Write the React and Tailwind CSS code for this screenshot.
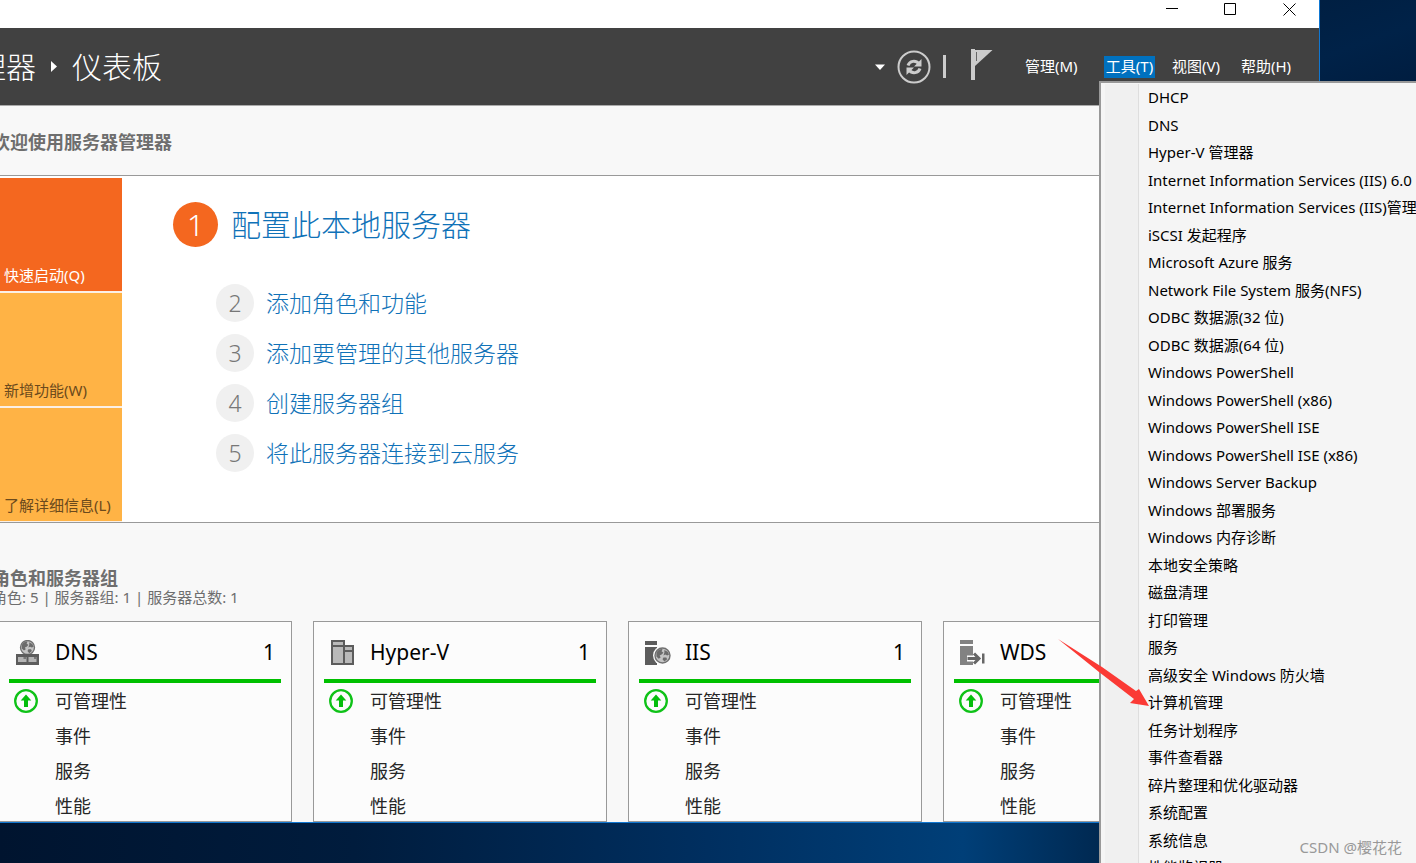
import React from "react";

const tools = [
  "DHCP",
  "DNS",
  "Hyper-V 管理器",
  "Internet Information Services (IIS) 6.0 管理器",
  "Internet Information Services (IIS)管理器",
  "iSCSI 发起程序",
  "Microsoft Azure 服务",
  "Network File System 服务(NFS)",
  "ODBC 数据源(32 位)",
  "ODBC 数据源(64 位)",
  "Windows PowerShell",
  "Windows PowerShell (x86)",
  "Windows PowerShell ISE",
  "Windows PowerShell ISE (x86)",
  "Windows Server Backup",
  "Windows 部署服务",
  "Windows 内存诊断",
  "本地安全策略",
  "磁盘清理",
  "打印管理",
  "服务",
  "高级安全 Windows 防火墙",
  "计算机管理",
  "任务计划程序",
  "事件查看器",
  "碎片整理和优化驱动器",
  "系统配置",
  "系统信息",
  "性能监视器",
];

const steps = [
  ["2", "添加角色和功能"],
  ["3", "添加要管理的其他服务器"],
  ["4", "创建服务器组"],
  ["5", "将此服务器连接到云服务"],
];

function Globe({ cx, cy, r }) {
  return (
    <g transform={`translate(${cx} ${cy}) scale(${r / 8})`}>
      <circle r="8" fill="#c4c4c4" stroke="#707070" strokeWidth="1.5" />
      <path d="M-6.5-3C-5-6-2-7 0-6.8L-1-4.5 1-3-1-1-3 0-2 2-4 3.5-6.5 1zM2-6 5.5-4 7-1 5 0 3-1 1 0 2-3zM1 2 4 2 5 4 2 6.5 0 4z" fill="#6b6b6b" />
    </g>
  );
}

function DnsIcon() {
  return (
    <svg width="26" height="26" viewBox="0 0 26 26" aria-hidden="true">
      <Globe cx={12.5} cy={7.5} r={7} />
      <rect x="1" y="14" width="23" height="11" fill="#5c5c5c" />
      <path d="M3 17h8.500v5H3zM13.500 17h8v5h-8z" fill="#b4b4b4" />
      <path d="M8.500 17H11v2H8.500zM19 17h2.500v2H19z" fill="#777" />
    </svg>
  );
}

function HyperVIcon() {
  return (
    <svg width="26" height="26" viewBox="0 0 26 26" aria-hidden="true">
      <g fill="#b9b9b9" stroke="#5c5c5c" strokeWidth="2">
        <path d="M2 1h12v23H2zM14 6h9v18h-9z" />
        <path d="M2 6h12M14 11h9" fill="none" />
      </g>
    </svg>
  );
}

function IisIcon() {
  return (
    <svg width="28" height="26" viewBox="0 0 28 26" aria-hidden="true">
      <path d="M0 1h12v4H0zM0 7h12v18H0z" fill="#5c5c5c" />
      <circle cx="17.500" cy="15.500" r="9.500" fill="#fcfcfc" />
      <Globe cx={17.5} cy={15.5} r={7.5} />
    </svg>
  );
}

function WdsIcon() {
  return (
    <svg width="28" height="26" viewBox="0 0 28 26" aria-hidden="true">
      <path d="M0 0h13v4H0zM0 6h13v19H0z" fill="#828282" />
      <path d="M7 18.500h14M15.500 12.500l6 6-6 6" fill="none" stroke="#fcfcfc" strokeWidth="6" />
      <path d="M7.500 18.500h12M14 13.500l5 5-5 5" fill="none" stroke="#666" strokeWidth="3" />
      <path d="M22 13.500h2.500v10H22z" fill="#666" />
    </svg>
  );
}

function UpIcon() {
  return (
    <svg width="24" height="24" viewBox="0 0 24 24" aria-hidden="true">
      <circle cx="12" cy="12" r="10.800" fill="none" stroke="#0fc218" strokeWidth="2.300" />
      <path d="M12 5.500 17.300 11.500H14V18h-4v-6.500H6.700z" fill="#04be0c" />
    </svg>
  );
}

const cards = [
  { name: "DNS", Icon: DnsIcon },
  { name: "Hyper-V", Icon: HyperVIcon },
  { name: "IIS", Icon: IisIcon },
  { name: "WDS", Icon: WdsIcon },
];

function Card({ name, Icon }) {
  return (
    <section className="w-[294px] shrink-0 border border-[#999] bg-[#fcfcfc] px-[10px] pt-1">
      <header className="flex h-[57px] items-center border-b-4 border-[#00c000] pr-1.5 text-[21px] text-black">
        <span className="flex w-[46px] pl-1.5">
          <Icon />
        </span>
        <h3 className="grow">{name}</h3>
        <span>1</span>
      </header>
      <ul className="pt-px text-[18px] text-[#262626]">
        {["可管理性", "事件", "服务", "性能"].map((label, i) => (
          <li key={label} className="flex h-[35px] items-center">
            <span className="w-[46px] pb-0.5 pl-[5px]">{i === 0 && <UpIcon />}</span>
            <a href="#detail">{label}</a>
          </li>
        ))}
      </ul>
    </section>
  );
}

function Tile({ label, className }) {
  return (
    <button type="button" className={`flex h-[113px] items-end px-1 pb-1 text-left text-[15px] leading-6 whitespace-nowrap ${className}`}>
      {label}
    </button>
  );
}

export default function App() {
  return (
    <div className="relative flex h-screen overflow-hidden bg-[linear-gradient(90deg,#00142f_0%,#001c3d_25%,#002f60_50%,#003f78_68%,#002850_78%,#00204a_100%)] pr-[96px] pb-10 font-['Noto_Sans','Noto_Sans_CJK_SC',sans-serif]">
      <div className="absolute top-0 right-0 h-[82px] w-24 bg-[linear-gradient(160deg,#001f42,#002248_50%,#001d40)]" />
      <div className="flex min-w-0 grow flex-col overflow-hidden border-r border-b border-[#1177d1] bg-[#f8f8f8]">
        <div className="flex h-7 shrink-0 items-start justify-end bg-white text-black">
          <button type="button" aria-label="最小化" className="flex h-[18px] w-[58px] items-center justify-center">
            <svg width="13" height="13" viewBox="0 0 13 13"><path d="M0 5h12v1H0z" /></svg>
          </button>
          <button type="button" aria-label="最大化" className="flex h-[18px] w-[58px] items-center justify-center">
            <svg width="12" height="12" viewBox="0 0 12 12"><path d="M.5.5h11v11H.5z" fill="none" stroke="currentColor" /></svg>
          </button>
          <button type="button" aria-label="关闭" className="flex h-[18px] w-[60px] items-center justify-center">
            <svg width="13" height="13" viewBox="0 0 13 13"><path d="M.5.5l12 12M12.500.5l-12 12" fill="none" stroke="currentColor" /></svg>
          </button>
        </div>

        <header className="flex h-[78px] shrink-0 items-center border-b border-[#aaa] bg-[#414141] text-white">
          <h1 className="-ml-6 flex grow items-center text-[30px] font-light whitespace-nowrap">
            <span>理器</span>
            <svg className="mx-[15px]" width="6" height="11" viewBox="0 0 6 11" aria-hidden="true"><path d="M0 0l6 5.500L0 11z" fill="#fff" /></svg>
            <span>仪表板</span>
          </h1>
          <svg width="10" height="6" viewBox="0 0 10 6" aria-hidden="true"><path d="M0 0.500h10L5 6z" fill="#fff" /></svg>
          <button type="button" aria-label="刷新" className="ml-3">
            <svg width="34" height="34" viewBox="0 0 34 34">
              <circle cx="17" cy="17" r="15.500" fill="none" stroke="#ccc" strokeWidth="2" />
              <path d="M11 15.500C12.500 11 18.500 9.500 22 14M23 18.500C21.500 23 15.500 24.500 12 20" fill="none" stroke="#ccc" strokeWidth="3" />
              <path d="M24.500 9v7.500H17zM9.500 25v-7.500H17z" fill="#ccc" />
            </svg>
          </button>
          <span className="mx-3 h-[23px] w-[3px] bg-[#ccc]" />
          <button type="button" aria-label="通知" className="mr-8 ml-3 pb-1">
            <svg width="23" height="31" viewBox="0 0 23 31">
              <path d="M1 0h4v31H1z" fill="#ccc" />
              <path d="M4 1h18.500L5 17z" fill="#ccc" />
              <path d="M6.500 3v9" stroke="#666" strokeWidth="1" />
            </svg>
          </button>
          <nav className="flex text-[15px] leading-5 whitespace-nowrap">
            <button type="button" className="w-[79px] pb-0.5 text-left">管理(M)</button>
            <button type="button" aria-expanded="true" className="mr-[17px] w-[51px] bg-[#0071bf] pb-0.5">工具(T)</button>
            <button type="button" className="w-[69px] pb-0.5 text-left">视图(V)</button>
            <button type="button" className="w-[78px] pb-0.5 text-left">帮助(H)</button>
          </nav>
        </header>

        <main className="flex min-h-0 grow flex-col overflow-hidden">
          <h2 className="-ml-2 flex h-[69px] shrink-0 items-center pt-1 text-[18px] font-bold text-[#6e6e6e]">欢迎使用服务器管理器</h2>
          <section className="flex shrink-0 border-y border-[#999] bg-white pt-0.5">
            <div className="flex w-[122px] flex-col gap-0.5 bg-[#fbf0e6] pb-px">
              <Tile label="快速启动(Q)" className="bg-[#f4671f] text-white" />
              <Tile label="新增功能(W)" className="bg-[#ffb345] text-[#6b4a1c]" />
              <Tile label="了解详细信息(L)" className="bg-[#ffb345] text-[#6b4a1c]" />
            </div>
            <div className="pt-6 pl-[51px] font-light text-[#1072b8]">
              <a href="#local" className="flex items-center gap-[13px] text-[30px] leading-[45px]">
                <span className="flex size-[45px] items-center justify-center rounded-full bg-[#f4671f] text-white">1</span>
                配置此本地服务器
              </a>
              <ol className="mt-[31px] ml-[43px]">
                {steps.map(([n, label]) => (
                  <li key={n} className="flex h-[50px] items-center">
                    <a href={`#step-${n}`} className="flex items-center gap-3 text-[23px] leading-[38px]">
                      <span className="flex size-[38px] items-center justify-center rounded-full bg-[#f0f0f0] text-[#777]">{n}</span>
                      {label}
                    </a>
                  </li>
                ))}
              </ol>
            </div>
          </section>
          <div className="-ml-2 flex shrink-0 flex-col pt-11 pb-4 text-[#6e6e6e]">
            <h2 className="text-[18px] leading-[22px] font-bold">角色和服务器组</h2>
            <p className="text-[15px] leading-4">角色: 5 | 服务器组: 1 | 服务器总数: 1</p>
          </div>
          <div className="-ml-[2px] flex min-h-0 grow gap-[21px]">
            {cards.map((card) => (
              <Card key={card.name} {...card} />
            ))}
          </div>
        </main>
      </div>

      <div className="absolute top-[81px] right-0 bottom-0 w-[317px] overflow-hidden border-t-2 border-l-2 border-[#999] bg-[#f5f5f5] pt-px">
        <ul role="menu" className="ml-1 border-l-[33px] border-[#f0f0f0] text-[15px] whitespace-nowrap text-black">
          {tools.map((tool) => (
            <li key={tool} role="none" className="flex items-center border-l border-[#dedede] pl-[9px] odd:h-[27px] even:h-7">
              <button type="button" role="menuitem">{tool}</button>
            </li>
          ))}
        </ul>
      </div>

      <svg className="absolute top-[638px] right-[265px]" width="96" height="70" viewBox="0 0 96 70" aria-hidden="true">
        <path d="M3 1 47 29 81 53 84 51 94 68 75 65 79 61 44 34z" fill="#fb3a35" />
      </svg>
      <span className="absolute right-3.5 bottom-1.5 text-[15px] leading-5 text-[#999]">CSDN @樱花花</span>
    </div>
  );
}
